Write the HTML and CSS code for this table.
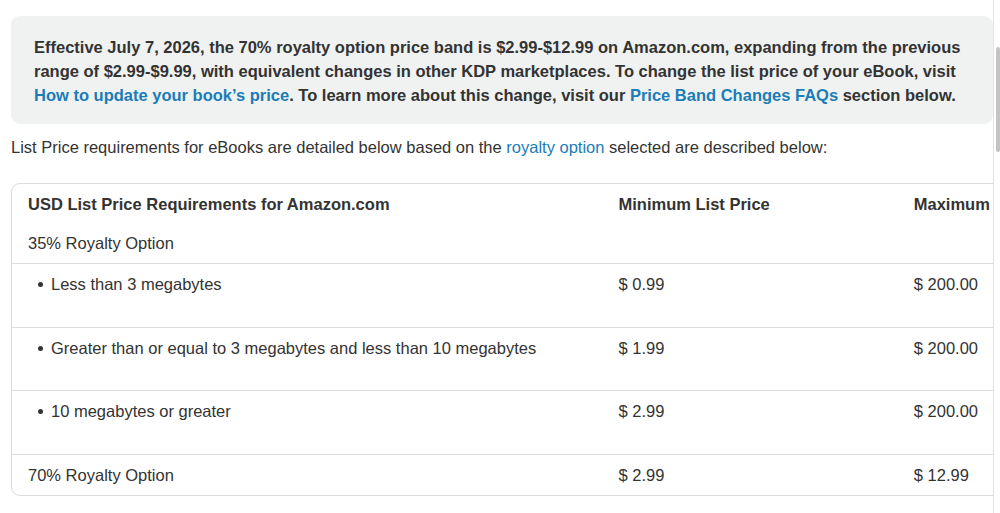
FILE: index.html
```html
<!DOCTYPE html>
<html lang="en">
<head>
<meta charset="utf-8">
<title>eBook List Price Requirements</title>
<link rel="stylesheet" href="styles.css">
</head>
<body>
<main class="content">
  <div class="notice">
    <p>Effective July 7, 2026, the 70% royalty option price band is $2.99-$12.99 on Amazon.com, expanding from the previous range of $2.99-$9.99, with equivalent changes in other KDP marketplaces. To change the list price of your eBook, visit <a href="#">How to update your book’s price</a>. To learn more about this change, visit our <a href="#">Price Band Changes FAQs</a> section below.</p>
  </div>
  <p class="intro">List Price requirements for eBooks are detailed below based on the <a href="#">royalty option</a> selected are described below:</p>
  <div class="table-wrap">
    <table class="prices">
      <thead>
        <tr class="head">
          <th class="c1">USD List Price Requirements for Amazon.com</th>
          <th class="c2">Minimum List Price</th>
          <th class="c3">Maximum List Price</th>
        </tr>
      </thead>
      <tbody>
        <tr class="group">
          <td class="c1">35% Royalty Option</td>
          <td class="c2"></td>
          <td class="c3"></td>
        </tr>
        <tr class="item">
          <td class="c1"><span class="bullet">Less than 3 megabytes</span></td>
          <td class="c2">$ 0.99</td>
          <td class="c3">$ 200.00</td>
        </tr>
        <tr class="item">
          <td class="c1"><span class="bullet">Greater than or equal to 3 megabytes and less than 10 megabytes</span></td>
          <td class="c2">$ 1.99</td>
          <td class="c3">$ 200.00</td>
        </tr>
        <tr class="item">
          <td class="c1"><span class="bullet">10 megabytes or greater</span></td>
          <td class="c2">$ 2.99</td>
          <td class="c3">$ 200.00</td>
        </tr>
        <tr class="last">
          <td class="c1">70% Royalty Option</td>
          <td class="c2">$ 2.99</td>
          <td class="c3">$ 12.99</td>
        </tr>
      </tbody>
    </table>
  </div>
</main>
<div class="scrollbar"><div class="thumb"></div></div>
</body>
</html>
```

FILE: styles.css
```css
html, body {
  margin: 0;
  padding: 0;
  background: #ffffff;
}
body {
  font-family: "Liberation Sans", Arial, sans-serif;
  font-size: 16.5px;
  line-height: 24px;
  color: #333333;
  overflow: hidden;
  height: 513px;
}
a {
  color: #1b7db8;
  text-decoration: none;
}
.content {
  width: 982px;
  padding: 16px 0 0 11px;
  border-right: 1px solid #e3e3e3;
  height: 497px;
}
.notice {
  background: #f0f2f2;
  border-radius: 9px;
  padding: 19px 23px 17px 23px;
}
.notice p {
  margin: 0;
  font-weight: bold;
}
.notice a {
  font-weight: bold;
}
.intro {
  margin: 11px 0 0 0;
}
.table-wrap {
  margin-top: 24px;
  overflow: hidden;
}
.prices {
  width: 1120px;
  border-collapse: separate;
  border-spacing: 0;
  border: 1px solid #dcdcdc;
  border-radius: 9px;
}
.prices th, .prices td {
  text-align: left;
  vertical-align: top;
  padding: 8px 16px 0 16px;
}
.prices th {
  font-weight: bold;
  padding-bottom: 6px;
}
.c1 { width: 558px; }
.c2 { width: 263px; }
.c3 { width: 200px; }
.group td {
  padding-top: 9px;
  padding-bottom: 8px;
}
.item td {
  border-top: 1px solid #dcdcdc;
  padding-bottom: 30.7px;
}
.last td {
  border-top: 1px solid #dcdcdc;
  padding-bottom: 8px;
}
.bullet {
  display: block;
  position: relative;
  padding-left: 23px;
}
.bullet::before {
  content: "";
  position: absolute;
  left: 10px;
  top: 10px;
  width: 5px;
  height: 5px;
  border-radius: 50%;
  background: #333333;
}
.scrollbar {
  position: fixed;
  top: 0;
  right: 0;
  width: 6px;
  height: 513px;
  background: #ffffff;
}
.thumb {
  position: absolute;
  top: 47px;
  left: 2px;
  width: 4px;
  height: 105px;
  border-radius: 2px;
  background: #c4c4c4;
}
```
